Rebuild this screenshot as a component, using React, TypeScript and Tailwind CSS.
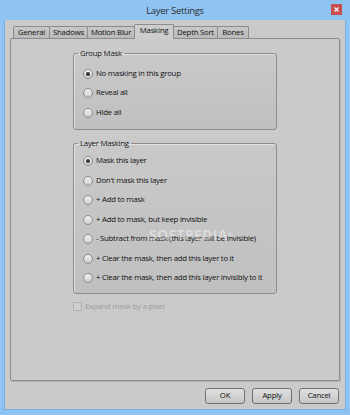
import React from "react";

const font = { fontFamily: '"Open Sans", "Noto Sans", sans-serif' };

function Radio({ checked, label }: { checked?: boolean; label: string }) {
  return (
    <div className="flex items-center h-[19.5px] pl-[9px]">
      <span className="w-[10px] h-[10px] rounded-full border border-[#8c8c8c] bg-gradient-to-b from-[#f2f2f2] to-[#cdcdcd] flex items-center justify-center shrink-0">
        {checked && <span className="w-[4px] h-[4px] rounded-full bg-[#333333]" />}
      </span>
      <span className="ml-[3px] text-[7.8px] font-medium tracking-[-0.25px] text-[#111111] leading-none whitespace-nowrap">{label}</span>
    </div>
  );
}

function Group({ title, children, className }: { title: string; children: React.ReactNode; className?: string }) {
  return (
    <fieldset className={"w-[204px] border border-[#8c8c8c] rounded-[3px] bg-gradient-to-b from-[#c9c9c9] to-[#c0c0c0] shadow-[inset_1px_1px_0_rgba(255,255,255,0.45)] " + (className ?? "")}>
      <legend className="ml-[4px] px-[2px] text-[7.8px] font-medium tracking-[-0.25px] leading-[11px] text-[#111111]">{title}</legend>
      {children}
    </fieldset>
  );
}

const tabs = [
  { label: "General", w: "w-[37px]" },
  { label: "Shadows", w: "w-[39px]" },
  { label: "Motion Blur", w: "w-[48px]" },
  { label: "Masking", w: "w-[40px]", sel: true },
  { label: "Depth Sort", w: "w-[45px]" },
  { label: "Bones", w: "w-[32px]" },
];

export default function App() {
  return (
    <div className="w-[350px] h-[415px] bg-[#8fc3f1] flex flex-col" style={font}>
      <div className="h-[20px] grid grid-cols-[1fr_auto_1fr] items-center shrink-0">
        <div />
        <div className="text-[9.5px] tracking-[-0.3px] text-[#2e2e2e] leading-none pt-[1px]">Layer Settings</div>
        <div className="flex justify-end pr-[8px]">
          <div className="w-[11px] h-[11px] bg-[#c94f4f] flex items-center justify-center mb-[1px]">
            <svg width="5" height="5" viewBox="0 0 5 5">
              <path d="M0.5 0.5 L4.5 4.5 M4.5 0.5 L0.5 4.5" stroke="#ffffff" strokeWidth="1.2" />
            </svg>
          </div>
        </div>
      </div>
      <div className="mx-[4px] mb-[5px] flex-1 bg-[#cacaca] border border-t-0 border-[#7aaede] flex flex-col">
        {/* tabs */}
        <div className="h-[18px] flex items-end pl-[9px] shrink-0">
          {tabs.map((t) =>
            t.sel ? (
              <div
                key={t.label}
                className={`${t.w} h-[15px] -mb-px -ml-px relative z-10 bg-[#cdcdcd] border border-b-0 border-[#8c8c8c] rounded-t-[2px] flex items-center justify-center text-[7.8px] font-medium tracking-[-0.25px] text-[#111111] leading-none pb-[2px]`}
              >
                {t.label}
              </div>
            ) : (
              <div
                key={t.label}
                className={`${t.w} h-[12px] -ml-px bg-gradient-to-b from-[#c8c8c8] to-[#bababa] border border-b-0 border-[#8c8c8c] rounded-t-[2px] flex items-center justify-center text-[7.8px] font-medium tracking-[-0.25px] text-[#111111] leading-none`}
              >
                {t.label}
              </div>
            )
          )}
        </div>
        {/* panel */}
        <div className="mx-[5px] h-[343px] shrink-0 border border-[#8c8c8c] rounded-[2px] bg-[#cacaca] shadow-[1px_1px_0_rgba(0,0,0,0.12)] flex flex-col items-center relative">
          <Group title="Group Mask" className="mt-[8.5px] pt-[5.5px] pb-[6px]">
            <Radio checked label="No masking in this group" />
            <Radio label="Reveal all" />
            <Radio label="Hide all" />
          </Group>
          <Group title="Layer Masking" className="mt-[8.5px] pt-[2.5px] pb-[4.5px]">
            <Radio checked label="Mask this layer" />
            <Radio label="Don't mask this layer" />
            <Radio label="+ Add to mask" />
            <Radio label="+ Add to mask, but keep invisible" />
            <Radio label="- Subtract from mask (this layer will be invisible)" />
            <Radio label="+ Clear the mask, then add this layer to it" />
            <Radio label="+ Clear the mask, then add this layer invisibly to it" />
          </Group>
          <div className="w-[204px] flex items-center h-[12px] mt-[7px]">
            <span className="w-[9px] h-[9px] border border-[#b0b0b0] bg-[#cfcfcf] rounded-[1px]" />
            <span className="ml-[3px] text-[7.8px] font-medium tracking-[-0.25px] text-[#9c9c9c] leading-none">Expand mask by a pixel</span>
          </div>
          <div className="absolute left-[138px] top-[189px] text-[14px] font-bold text-white opacity-40 tracking-[0.3px] leading-none select-none pointer-events-none">
            SOFTPEDIA<sup className="text-[6px]">®</sup>
          </div>
        </div>
        {/* buttons */}
        <div className="flex justify-end gap-[7px] pr-[6px] mt-[7px]">
          {["OK", "Apply", "Cancel"].map((b) => (
            <div
              key={b}
              className="w-[40px] h-[16px] border border-[#727272] rounded-[3px] bg-gradient-to-b from-[#e0e0e0] to-[#c6c6c6] flex items-center justify-center text-[7.8px] font-medium tracking-[-0.25px] text-[#111111] leading-none"
            >
              {b}
            </div>
          ))}
        </div>
      </div>
    </div>
  );
}
